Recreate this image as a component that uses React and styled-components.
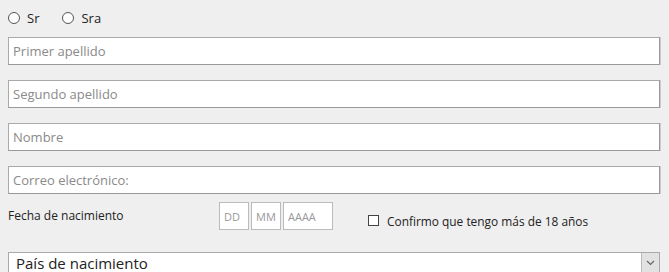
import React from "react";
import styled, { createGlobalStyle } from "styled-components";

const Global = createGlobalStyle`
  html, body { margin: 0; padding: 0; background: #efefef; }
  body { font-family: "Open Sans", "Liberation Sans", sans-serif; color: #333; }
`;

const Form = styled.form`
  padding: 8px;
  display: flex;
  flex-direction: column;
`;

const RadioRow = styled.div`
  display: flex;
  align-items: center;
  height: 20px;
  gap: 23px;
  margin-bottom: 9px;
`;

const RadioLabel = styled.label`
  display: flex;
  align-items: center;
  gap: 7px;
  font-size: 13px;
  color: #222;
`;

const Radio = styled.input.attrs({ type: "radio" })`
  appearance: none;
  margin: 0;
  width: 12px;
  height: 12px;
  border: 1px solid #555;
  border-radius: 50%;
  background: #fff;
  box-sizing: border-box;
`;

const TextInput = styled.input`
  box-sizing: border-box;
  width: 652px;
  height: 28px;
  margin: 0 0 15px 0;
  padding: 0 4px;
  border: 1px solid #aaa;
  border-right-color: #999;
  border-bottom-color: #999;
  box-shadow: 1px 0 0 #ccc;
  background: #fff;
  font-family: inherit;
  font-size: 13px;
  color: #333;
  outline: none;
  &::placeholder { color: #8a8a8a; }
`;

const DateRow = styled.div`
  display: flex;
  align-items: center;
  height: 28px;
  margin-top: -7px;
  margin-bottom: 22px;
`;

const DateLabel = styled.span`
  width: 211px;
  font-size: 12px;
  color: #222;
  margin-top: -1px;
`;

const DateGroup = styled.div`
  display: flex;
  gap: 2px;
`;

const DateBox = styled.input`
  box-sizing: border-box;
  width: ${(p) => p.$w}px;
  height: 28px;
  margin: 0;
  padding: 0 4px;
  border: 1px solid #bbb;
  background: #fff;
  font-family: inherit;
  font-size: 11px;
  outline: none;
  &::placeholder { color: #999; }
`;

const CheckLabel = styled.label`
  display: flex;
  align-items: center;
  gap: 8px;
  margin-left: 35px;
  margin-top: 9px;
  font-size: 11.9px;
  color: #222;
`;

const Check = styled.input.attrs({ type: "checkbox" })`
  appearance: none;
  margin: 0;
  width: 11px;
  height: 11px;
  border: 1px solid #444;
  background: #fff;
  box-sizing: border-box;
`;

const SelectWrap = styled.div`
  box-sizing: border-box;
  width: 652px;
  height: 21px;
  display: flex;
  border: 1px solid #aaa;
  background: #fff;
`;

const Select = styled.select`
  appearance: none;
  flex: 1;
  border: none;
  background: transparent;
  padding: 0 0 0 7px;
  font-family: inherit;
  font-size: 15px;
  color: #222;
  outline: none;
`;

const ArrowBox = styled.span`
  width: 17px;
  display: flex;
  align-items: center;
  justify-content: center;
  background: #e2e2e2;
  border-left: 1px solid #bbb;
`;

export default function App() {
  return (
    <>
      <Global />
      <Form>
        <RadioRow>
          <RadioLabel><Radio name="t" />Sr</RadioLabel>
          <RadioLabel><Radio name="t" />Sra</RadioLabel>
        </RadioRow>
        <TextInput placeholder="Primer apellido" />
        <TextInput placeholder="Segundo apellido" />
        <TextInput placeholder="Nombre" />
        <TextInput placeholder="Correo electrónico:" />
        <DateRow>
          <DateLabel>Fecha de nacimiento</DateLabel>
          <DateGroup>
            <DateBox $w={30} placeholder="DD" />
            <DateBox $w={30} placeholder="MM" />
            <DateBox $w={50} placeholder="AAAA" />
          </DateGroup>
          <CheckLabel><Check />Confirmo que tengo más de 18 años</CheckLabel>
        </DateRow>
        <SelectWrap>
          <Select defaultValue="">
            <option value="">País de nacimiento</option>
          </Select>
          <ArrowBox>
            <svg width="9" height="6" viewBox="0 0 9 6">
              <path d="M1 1l3.5 3.5L8 1" fill="none" stroke="#666" strokeWidth="1.2" />
            </svg>
          </ArrowBox>
        </SelectWrap>
      </Form>
    </>
  );
}
